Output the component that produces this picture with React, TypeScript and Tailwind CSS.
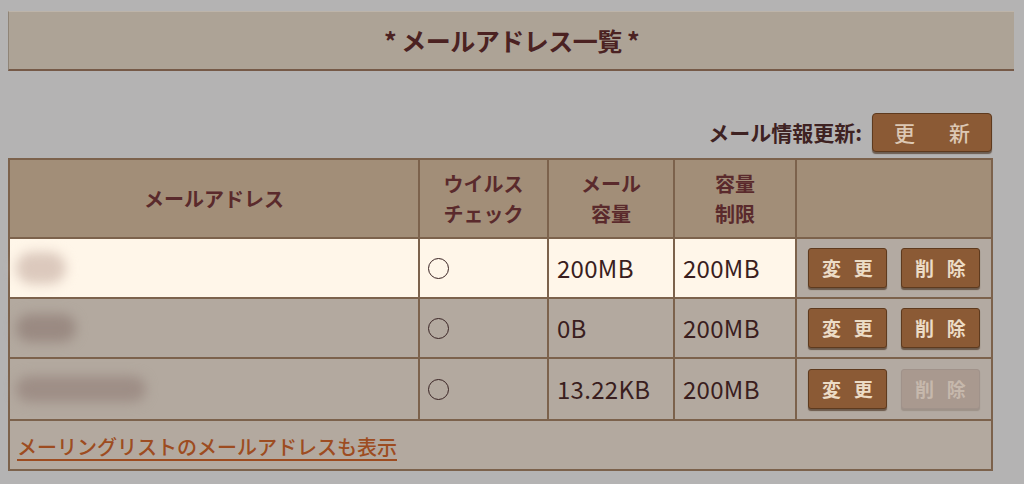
import React from "react";

const jp = { fontFamily: '"Noto Sans CJK JP", "Noto Sans", sans-serif' };

const rows = [
  { blob: "w-[50px] h-[32px] bg-[#dcc9bd]", mail: "200MB", limit: "200MB", active: true, canDelete: true },
  { blob: "w-[60px] h-[28px] bg-[#9a8a82]", mail: "0B", limit: "200MB", active: false, canDelete: true },
  { blob: "w-[130px] h-[26px] bg-[#9e8e86]", mail: "13.22KB", limit: "200MB", active: false, canDelete: false },
];

const ActionButton = ({ label, disabled }: { label: string; disabled?: boolean }) => (
  <button
    className={
      disabled
        ? "h-[40px] w-[79px] flex items-center justify-between px-[13px] rounded-[3px] border border-[#a0928a] bg-[#a9998f] text-[19px] font-bold text-[#c6b8ac] shadow-[0_2px_1px_rgba(90,70,60,0.25)]"
        : "h-[40px] w-[79px] flex items-center justify-between px-[13px] rounded-[3px] border border-[#5e3a1e] bg-[#8b5a35] text-[19px] font-bold text-[#ecdcc6] shadow-[0_2px_1px_rgba(60,35,15,0.6)]"
    }
  >
    {label.split("").map((c) => (
      <span key={c}>{c}</span>
    ))}
  </button>
);

export default function App() {
  return (
    <div style={jp} className="w-[1024px] h-[484px] overflow-hidden bg-[#b4b3b3] pt-[11px] pl-[8px]">
      <div className="mr-[10px] h-[60px] flex items-center justify-center bg-[#ada396] border-t border-l border-t-[#bdb4a9] border-l-[#8f8477] border-b-[2px] border-b-[#765a48]">
        <h1 className="text-[25px] font-bold text-[#4b2222] tracking-[-0.5px]">* メールアドレス一覧 *</h1>
      </div>

      <div className="mt-[42px] mr-[32px] flex items-center justify-end gap-[10px]">
        <span className="text-[21px] font-bold text-[#3e2222]">メール情報更新:</span>
        <button className="h-[39px] w-[120px] flex items-center justify-between px-[21px] rounded-[4px] border border-[#5e3a1e] bg-[#8b5a35] text-[21px] font-medium text-[#dcc8b4] shadow-[0_2px_1px_rgba(60,35,15,0.6)]">
          <span>更</span>
          <span>新</span>
        </button>
      </div>

      <table className="mt-[6px] w-[985px] table-fixed border-collapse border-2 border-[#7c624c]">
        <colgroup>
          <col className="w-[410px]" />
          <col className="w-[129px]" />
          <col className="w-[126px]" />
          <col className="w-[122px]" />
          <col />
        </colgroup>
        <thead>
          <tr className="h-[79px] bg-[#a28e78] text-[20px] font-bold leading-[30px] text-[#5a2a2c]">
            <th className="border-2 border-[#7c624c]">メールアドレス</th>
            <th className="border-2 border-[#7c624c]">ウイルス<br />チェック</th>
            <th className="border-2 border-[#7c624c]">メール<br />容量</th>
            <th className="border-2 border-[#7c624c]">容量<br />制限</th>
            <th className="border-2 border-[#7c624c]"></th>
          </tr>
        </thead>
        <tbody className="text-[24px] tracking-[0.3px] text-[#3a1e1e]">
          {rows.map((r, i) => {
            const cell = r.active ? "bg-[#fff6e9]" : "bg-[#b3a99f]";
            return (
              <tr key={i} className={i === 2 ? "h-[62px]" : "h-[60px]"}>
                <td className={`border-2 border-[#7c624c] ${cell} pl-[6px]`}>
                  <div className={`${r.blob} rounded-full blur-[6px]`} />
                </td>
                <td className={`border-2 border-[#7c624c] ${cell} pl-[8px]`}>
                  <div className="h-[21px] w-[21px] rounded-full border-[1.5px] border-[#3a2424]" />
                </td>
                <td className={`border-2 border-[#7c624c] ${cell} pl-[8px]`}>{r.mail}</td>
                <td className={`border-2 border-[#7c624c] ${cell} pl-[8px]`}>{r.limit}</td>
                <td className="border-2 border-[#7c624c] bg-[#b3aaa2] pl-[11px]">
                  <div className="flex gap-[14px]">
                    <ActionButton label="変更" />
                    <ActionButton label="削除" disabled={!r.canDelete} />
                  </div>
                </td>
              </tr>
            );
          })}
          <tr className="h-[50px] bg-[#b3a99f]">
            <td colSpan={5} className="border-2 border-[#7c624c] pl-[7px]">
              <a href="#" className="text-[20px] tracking-normal font-medium text-[#9d4c21] underline underline-offset-[4px] decoration-[2px]">
                メーリングリストのメールアドレスも表示
              </a>
            </td>
          </tr>
        </tbody>
      </table>
    </div>
  );
}
